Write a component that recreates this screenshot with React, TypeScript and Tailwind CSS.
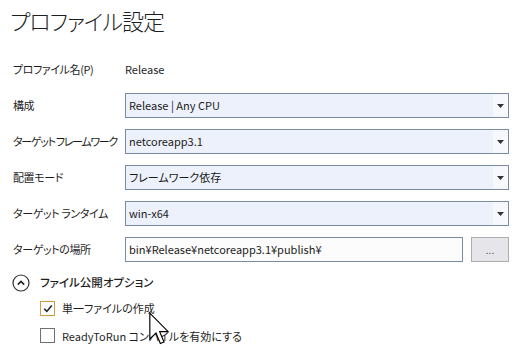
import { FC } from 'react';
import clsx from 'clsx';

const font = { fontFamily: '"Noto Sans CJK JP", "Noto Sans", sans-serif' };

const Combo: FC<{ value: string }> = ({ value }) => (
  <div className="flex h-[25px] w-[384px] border border-[#7a8aa0] bg-[#edf1fb]">
    <div className="flex flex-1 items-center pl-[3px] text-[11px] text-[#1b1b1b]">{value}</div>
    <div className="flex w-[15px] items-center justify-center bg-[#f6f8fd]">
      <svg width="7" height="4" viewBox="0 0 7 4">
        <path d="M0 0h7L3.5 4z" fill="#333" />
      </svg>
    </div>
  </div>
);

const Row: FC<{ label: string; tight?: boolean; children: React.ReactNode }> = ({ label, tight, children }) => (
  <div className="flex h-[25px] items-center">
    <div
      className={clsx(
        'w-[112px] shrink-0 whitespace-nowrap text-[11px] text-[#1e1e1e]',
        tight ? 'tracking-[-1.3px]' : 'tracking-[-0.4px]'
      )}
    >
      {label}
    </div>
    {children}
  </div>
);

export default function App() {
  return (
    <div
      style={font}
      className="relative h-[348px] w-[517px] overflow-hidden bg-white [font-feature-settings:'palt']"
    >
      <div className="pl-[10px] pt-[4px] text-[22px] font-light leading-[32px] tracking-[-1px] text-[#1e1e1e]">
        プロファイル設定
      </div>

      <div className="mt-[21px] flex flex-col gap-[11px] pl-[13px]">
        <Row label="プロファイル名(P)">
          <div className="text-[11px] text-[#1e1e1e]">Release</div>
        </Row>
        <Row label="構成">
          <Combo value="Release | Any CPU" />
        </Row>
        <Row label="ターゲット フレームワーク" tight>
          <Combo value="netcoreapp3.1" />
        </Row>
        <Row label="配置モード">
          <Combo value="フレームワーク依存" />
        </Row>
        <Row label="ターゲット ランタイム">
          <Combo value="win-x64" />
        </Row>
        <Row label="ターゲットの場所">
          <div className="flex h-[25px] w-[338px] items-center border border-[#7a8aa0] bg-[#fcfcfc] pl-[3px] text-[11px] text-[#1b1b1b]">
            bin¥Release¥netcoreapp3.1¥publish¥
          </div>
          <div className="ml-[8px] flex h-[25px] w-[38px] items-center justify-center border border-[#adadad] bg-[#e5e5ea] text-[10px] text-[#555]">
            ...
          </div>
        </Row>
      </div>

      <div className="mt-[12px] flex items-center pl-[12px]">
        <svg width="18" height="18" viewBox="0 0 18 18">
          <circle cx="9" cy="9" r="8" fill="none" stroke="#333" strokeWidth="1.2" />
          <path d="M5.8 10.6L9 7.4l3.2 3.2" fill="none" stroke="#222" strokeWidth="1.6" />
        </svg>
        <div className="ml-[10px] text-[11.5px] font-medium text-[#1e1e1e]">ファイル公開オプション</div>
      </div>

      <div className="mt-[8px] flex flex-col gap-[11px] pl-[40px]">
        <div className="flex items-center">
          <div className="flex h-[15px] w-[15px] items-center justify-center border border-[#d19a45] bg-white">
            <svg width="10" height="9" viewBox="0 0 10 9">
              <path d="M1.2 4.8L3.8 7.4 8.8 1.4" fill="none" stroke="#222" strokeWidth="1.6" />
            </svg>
          </div>
          <div className="ml-[7px] text-[11px] text-[#1e1e1e]">単一ファイルの作成</div>
        </div>
        <div className="flex items-center">
          <div className="h-[15px] w-[15px] border border-[#707070] bg-white" />
          <div className="ml-[7px] text-[11px] text-[#1e1e1e]">ReadyToRun コンパイルを有効にする</div>
        </div>
      </div>

      {/* mouse cursor */}
      <svg className="absolute left-[149px] top-[312px]" width="20" height="34" viewBox="0 0 12 20">
        <path
          d="M0.5 0.5v15.5l3.7-3.6 2.6 6.3 2.2-0.9-2.6-6.2h5.1z"
          fill="#fff"
          stroke="#000"
          strokeWidth="0.7"
          strokeLinejoin="miter"
        />
      </svg>
    </div>
  );
}
